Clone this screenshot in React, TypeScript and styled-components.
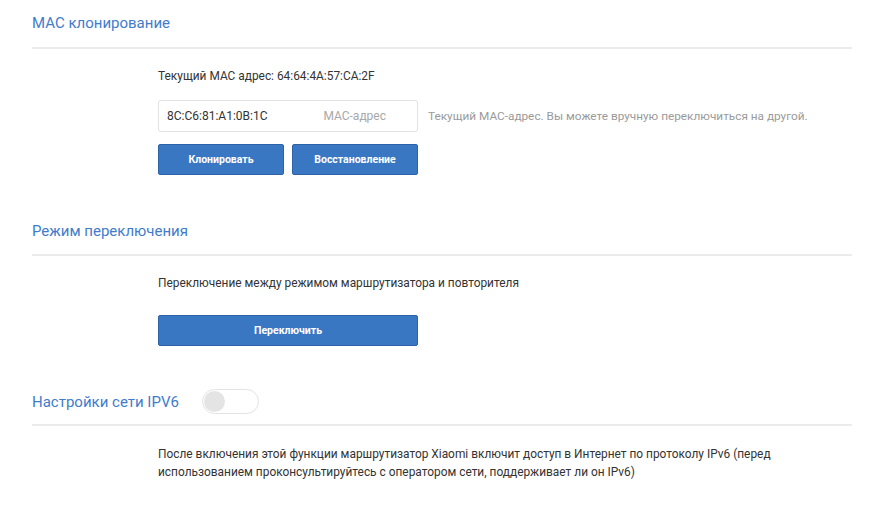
import React from "react";
import styled, { createGlobalStyle } from "styled-components";

const Global = createGlobalStyle`
  html, body { margin: 0; padding: 0; background: #ffffff; }
  body { font-family: Roboto, "Noto Sans", Arial, sans-serif; color: #333333; }
  * { box-sizing: border-box; }
`;

const Page = styled.div`
  width: 820px;
  margin-left: 32px;
  display: flex;
  flex-direction: column;
`;

const Section = styled.section<{ $top: number }>`
  margin-top: ${(p) => p.$top}px;
  display: flex;
  flex-direction: column;
`;

const Header = styled.div<{ $pt: number; $pb: number }>`
  display: flex;
  align-items: center;
  gap: 23px;
  padding-top: ${(p) => p.$pt}px;
  padding-bottom: ${(p) => p.$pb}px;
  border-bottom: 2px solid #ebebeb;
`;

const Title = styled.h2`
  margin: 0;
  font-size: 15px;
  line-height: 24px;
  font-weight: 400;
  color: #3f7ccb;
`;

const Body = styled.div<{ $pt: number }>`
  padding-left: 126px;
  padding-top: ${(p) => p.$pt}px;
  display: flex;
  flex-direction: column;
`;

const Text = styled.p`
  margin: 0;
  font-size: 11.9px;
  line-height: 18px;
  color: #333333;
`;

const Para = styled(Text)`
  max-width: 636px;
`;

const InputRow = styled.div`
  margin-top: 15px;
  display: flex;
  align-items: center;
  gap: 10px;
`;

const InputBox = styled.div`
  width: 260px;
  height: 32px;
  border: 1px solid #e2e2e2;
  border-radius: 3px;
  display: flex;
  align-items: center;
  justify-content: space-between;
  padding: 0 31px 0 8px;
  font-size: 12px;
`;

const Value = styled.span`
  color: #333333;
`;

const Placeholder = styled.span`
  color: #a8a8a8;
`;

const Hint = styled.span`
  font-size: 11.8px;
  color: #9a9a9a;
`;

const Buttons = styled.div<{ $top: number }>`
  margin-top: ${(p) => p.$top}px;
  display: flex;
  gap: 8px;
`;

const Button = styled.button<{ $w: number }>`
  width: ${(p) => p.$w}px;
  height: 31px;
  background: #3a77c2;
  border: 1px solid #2d64a8;
  border-radius: 2px;
  color: #ffffff;
  font-family: Roboto, "Noto Sans", Arial, sans-serif;
  font-size: 10.5px;
  font-weight: 700;
  padding: 0;
  cursor: pointer;
`;

const Toggle = styled.div`
  width: 57px;
  height: 25px;
  border: 1px solid #e3e3e3;
  border-radius: 13px;
  background: #ffffff;
  padding: 1px;
  display: flex;
  align-items: center;
`;

const Knob = styled.div`
  width: 21px;
  height: 21px;
  border-radius: 50%;
  background: #e4e4e4;
`;

export default function App() {
  return (
    <>
      <Global />
      <Page>
        <Section $top={0}>
          <Header $pt={11} $pb={12}>
            <Title>MAC клонирование</Title>
          </Header>
          <Body $pt={18}>
            <Text>Текущий MAC адрес: 64:64:4A:57:CA:2F</Text>
            <InputRow>
              <InputBox>
                <Value>8C:C6:81:A1:0B:1C</Value>
                <Placeholder>MAC-адрес</Placeholder>
              </InputBox>
              <Hint>Текущий MAC-адрес. Вы можете вручную переключиться на другой.</Hint>
            </InputRow>
            <Buttons $top={12}>
              <Button $w={126}>Клонировать</Button>
              <Button $w={126}>Восстановление</Button>
            </Buttons>
          </Body>
        </Section>

        <Section $top={44}>
          <Header $pt={0} $pb={11}>
            <Title>Режим переключения</Title>
          </Header>
          <Body $pt={18}>
            <Text>Переключение между режимом маршрутизатора и повторителя</Text>
            <Buttons $top={23}>
              <Button $w={260}>Переключить</Button>
            </Buttons>
          </Body>
        </Section>

        <Section $top={43}>
          <Header $pt={0} $pb={10}>
            <Title>Настройки сети IPV6</Title>
            <Toggle>
              <Knob />
            </Toggle>
          </Header>
          <Body $pt={19}>
            <Para>
              После включения этой функции маршрутизатор Xiaomi включит доступ в Интернет по протоколу IPv6 (перед
              использованием проконсультируйтесь с оператором сети, поддерживает ли он IPv6)
            </Para>
          </Body>
        </Section>
      </Page>
    </>
  );
}
